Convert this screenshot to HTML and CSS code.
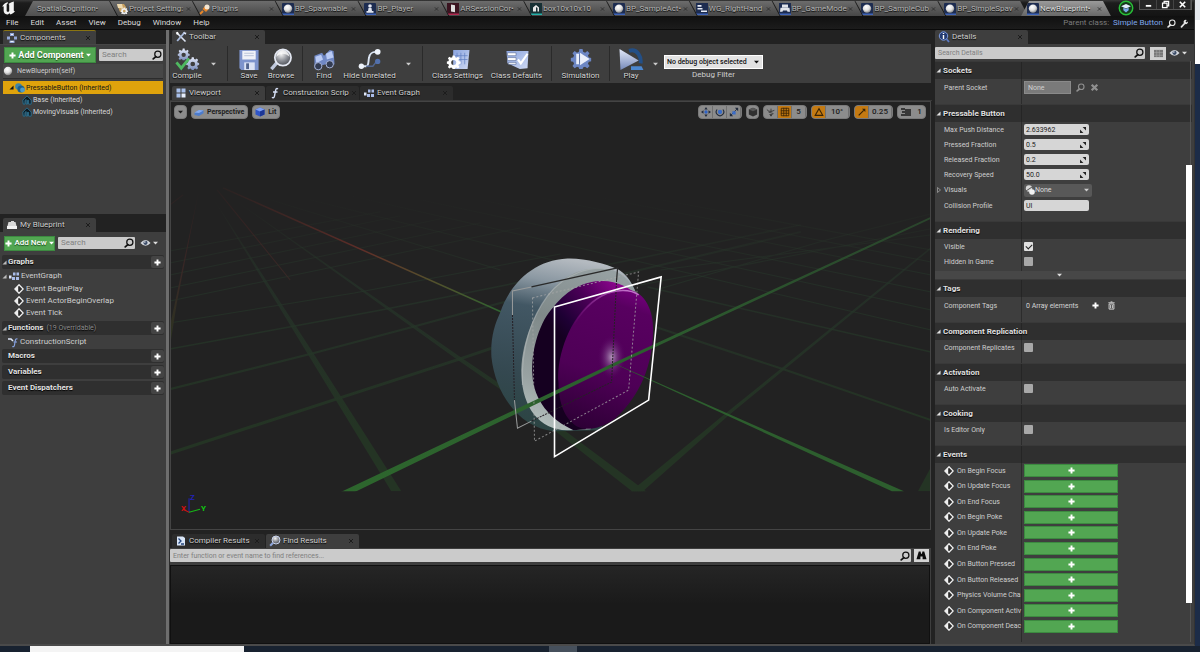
FILE: index.html
```html
<!DOCTYPE html>
<html lang="en">
<head>
<meta charset="utf-8">
<title>NewBlueprint - Blueprint Editor</title>
<link rel="stylesheet" href="styles.css">
</head>
<body>
<svg class="defs" width="0" height="0" aria-hidden="true">
  <defs>
    <linearGradient id="steel" x1="0" y1="0" x2="0" y2="1"><stop offset="0" stop-color="#e4eafa"/><stop offset="1" stop-color="#7488b8"/></linearGradient>
    <linearGradient id="paper" x1="0" y1="0" x2="1" y2="1"><stop offset="0" stop-color="#8aa4e0"/><stop offset="1" stop-color="#cfd9f2"/></linearGradient>
    <radialGradient id="ball" cx=".4" cy=".3" r=".8"><stop offset="0" stop-color="#fff"/><stop offset=".5" stop-color="#e0e0e0"/><stop offset="1" stop-color="#707070"/></radialGradient>
    <radialGradient id="lens" cx=".4" cy=".3" r=".8"><stop offset="0" stop-color="#f2f2f2"/><stop offset=".5" stop-color="#8c8f96"/><stop offset="1" stop-color="#3a3d44"/></radialGradient>
    <symbol id="i-x" viewBox="0 0 6 6"><path d="M1 1l4 4M5 1L1 5" stroke="currentColor" stroke-width="1" fill="none"/></symbol>
    <symbol id="i-xb" viewBox="0 0 8 8"><path d="M1.500 1.500l5 5M6.500 1.500l-5 5" stroke="currentColor" stroke-width="2" fill="none"/></symbol>
    <symbol id="i-caret" viewBox="0 0 6 4"><path d="M0 0.500h6L3 3.800z" fill="currentColor"/></symbol>
    <symbol id="i-tri" viewBox="0 0 6 6"><path d="M5.500 0.500v5H0.500z" fill="currentColor"/></symbol>
    <symbol id="i-plus" viewBox="0 0 8 8"><path d="M4 0.500v7M0.500 4h7" stroke="currentColor" stroke-width="2.200" fill="none"/></symbol>
    <symbol id="i-search" viewBox="0 0 12 12"><circle cx="7" cy="5" r="3.700" fill="none" stroke="currentColor" stroke-width="1.500"/><path d="M4.600 8L1.500 10.600" stroke="currentColor" stroke-width="2.200" stroke-linecap="round"/></symbol>
    <symbol id="i-eye" viewBox="0 0 12 8"><path d="M0.500 4Q6-2.500 11.500 4Q6 10 0.500 4z" fill="#d4d8de"/><circle cx="6" cy="3.800" r="2.300" fill="#3c4c68"/><circle cx="5.300" cy="3" r=".8" fill="#fff"/></symbol>
    <symbol id="i-ball" viewBox="0 0 12 12"><circle cx="6" cy="6" r="5" fill="url(#ball)"/></symbol>
    <symbol id="i-bpball" viewBox="0 0 12 12"><rect width="12" height="12" rx="1" fill="#1d2c50"/><rect y="10.500" width="12" height="1.500" fill="#3f64b8"/><circle cx="6" cy="5.600" r="4.200" fill="url(#ball)"/></symbol>
    <symbol id="i-pawn" viewBox="0 0 12 12"><rect width="12" height="12" rx="1" fill="#1d2c50"/><rect y="10.500" width="12" height="1.500" fill="#3f64b8"/><circle cx="6" cy="3" r="1.800" fill="#e6e9f2"/><path d="M4.500 5h3L8 8h1.500v1.800h-7V8H4z" fill="#dfe3ee"/></symbol>
    <symbol id="i-gear" viewBox="0 0 20 20"><path d="M8.500 1h3l.5 2.600 1.900.8L16 2.900l2.100 2.100-1.500 2.200.8 1.800 2.600.5v3l-2.600.5-.8 1.900 1.500 2.200-2.100 2.100-2.200-1.500-1.900.8-.5 2.500h-3L8 18.500l-1.800-.8L4 19.200 1.900 17.100l1.500-2.200-.8-1.900L0 12.500v-3L2.600 9l.8-1.800L1.900 5 4 2.900l2.200 1.500L8 3.600zM10 7.500a3.500 3.500 0 1 0 0 7 3.500 3.500 0 0 0 0-7z" fill-rule="evenodd"/></symbol>
    <symbol id="i-event" viewBox="0 0 10 10"><path d="M5 .8L9.200 5 5 9.200.8 5z" fill="#2a2a2a" stroke="#f2f2f2" stroke-width="1.300"/><path d="M4.200 2v6L1.300 5z" fill="#f2f2f2"/></symbol>
    <symbol id="i-graph" viewBox="0 0 12 10"><path d="M5 1.500h2.500v3H5zM8.500 1.500H11v3H8.500zM8 6h3v3H8zM4 6h3v3H4z" fill="#a9bbe8"/><path d="M1 4.500h2.500v3H1z" fill="#dfe6f8"/></symbol>
    <symbol id="i-house" viewBox="0 0 12 12"><path d="M1 6l5-5 5 5v5H8V6.500H6.500V11H5V5.500L3.500 6.500V11H1.500z" fill="#0d1a22" stroke="#2a7a9e" stroke-width="1"/></symbol>
    <symbol id="i-wrench" viewBox="0 0 12 12"><path d="M2 10.500L7 5" stroke="currentColor" stroke-width="2.200" stroke-linecap="round"/><path d="M10.500 3.200L8.600 4.700 7.400 3.500 8.900 1.300A2.900 2.900 0 1 0 10.500 3.200z" fill="currentColor"/></symbol>
    <symbol id="i-tools" viewBox="0 0 12 12"><path d="M2 2l8.500 8.500" stroke="#dfe6f4" stroke-width="1.600"/><path d="M9.800 1.200L2.200 10" stroke="#a9bbdd" stroke-width="1.800"/><path d="M8 1.500l2.500 2.300 1-2z" fill="#e8eefa"/><path d="M.8 1.500L3 .8l.8 2.500-2 .5z" fill="#fff"/></symbol>
    <symbol id="i-spin" viewBox="0 0 8 8"><path d="M3.600 1H7v3.400zM4.400 7H1V3.600z" fill="#222"/></symbol>
    <symbol id="i-bino" viewBox="0 0 12 12"><path d="M3 1.500h2L5.500 4h1L7 1.500h2L11.500 10H7.200V7H4.800v3H.5z" fill="#0c0c0c"/></symbol>
    <symbol id="i-lens" viewBox="0 0 12 12"><circle cx="7" cy="5" r="4" fill="url(#lens)" stroke="#c9d3ee" stroke-width="1"/><path d="M3.800 8L1.200 10.800" stroke="#8ea6dc" stroke-width="2"/></symbol>
    <symbol id="i-book" viewBox="0 0 12 10"><path d="M2.500 2h2.500V1h3v1h1.500L10.500 6h-9z" fill="#d9d9d9"/><path d="M1 6h10v3H1z" fill="#f2f2f2"/></symbol>
  </defs>
</svg>

<div class="desk">
<div class="window">
  <header class="titlebar">
    <svg class="logo" viewBox="0 0 16 15"><path d="M1.500 6.500C2.500 4 4.500 2.500 7 2v1C6 3.500 5.800 4 5.800 5v5c0 .8.500 1 1.200 1 .8 0 1.200-.4 1.200-1V5c0-.7-.2-1-.8-1.200C9 2.800 10.500 2 12.500 1.500v8.300c0 .6.400.7 1.200.3C13 11.700 11.300 13 9.500 13.500L8.400 12.500 7 13.600C4.500 13.400 3 12 3 10V6.500c0-.7-.6-.8-1.500 0z" fill="#f4f4f4"/></svg>
    <nav class="doc-tabs">
      <button class="doc first"><span>SpatialCognition•</span></button>
      <button class="doc"><svg class="ic12" viewBox="0 0 12 12"><path d="M1 1h7l2 3v5H4z" fill="#c8a060"/><path d="M1 1h5l1 4H2z" fill="#ecd9b0"/><svg x="4.500" y="4" width="7.500" height="7.500" fill="#f0f0f0"><use href="#i-gear"/></svg></svg><span>Project Setting:</span><svg class="x"><use href="#i-x"/></svg></button>
      <button class="doc"><svg class="ic12" viewBox="0 0 12 12"><path d="M1 11l3-3" stroke="#e8862a" stroke-width="2"/><path d="M3.500 6l3-3.500 3.500 3.200L7 9z" fill="#e8862a"/><circle cx="8" cy="4" r="2.500" fill="#f4e6d2"/></svg><span>Plugins</span><svg class="x"><use href="#i-x"/></svg></button>
      <button class="doc"><svg class="ic12"><use href="#i-bpball"/></svg><span>BP_Spawnable</span><svg class="x"><use href="#i-x"/></svg></button>
      <button class="doc"><svg class="ic12"><use href="#i-pawn"/></svg><span>BP_Player</span><svg class="x"><use href="#i-x"/></svg></button>
      <button class="doc"><svg class="ic12" viewBox="0 0 12 12"><rect width="12" height="12" fill="#3a1420"/><rect y="10.500" width="12" height="1.500" fill="#b02a50"/><path d="M4 1.500l4 .8v7L4 8.500z" fill="#ddd"/></svg><span>ARSessionCor•</span><svg class="x"><use href="#i-x"/></svg></button>
      <button class="doc"><svg class="ic12" viewBox="0 0 12 12"><rect width="12" height="12" fill="#173034"/><rect y="10.500" width="12" height="1.500" fill="#25b0a8"/><path d="M3 8.500v-4L6 2l3 2.500v4H7.500V5L6 4v4.500z" fill="#e8e8e8"/></svg><span>box10x10x10</span><svg class="x"><use href="#i-x"/></svg></button>
      <button class="doc"><svg class="ic12"><use href="#i-bpball"/></svg><span>BP_SampleAct•</span><svg class="x"><use href="#i-x"/></svg></button>
      <button class="doc"><svg class="ic12" viewBox="0 0 12 12"><rect width="12" height="12" fill="#1d2c50"/><rect y="10.500" width="12" height="1.500" fill="#3f64b8"/><path d="M1.500 2h4v1.800h-4zM1.500 5h5v1.500h-5zM5 7.500h6V9H5z" fill="#e8ecf6"/></svg><span>WG_RightHand</span><svg class="x"><use href="#i-x"/></svg></button>
      <button class="doc"><svg class="ic12" viewBox="0 0 12 12"><rect width="12" height="12" fill="#1d2c50"/><rect y="10.500" width="12" height="1.500" fill="#3f64b8"/><path d="M3 1.500h6v3H3zM1.500 4.800h9l.5 4H8.500L8 7.500H4l-.5 1.300H1z" fill="#e0e3ea"/></svg><span>BP_GameMode</span><svg class="x"><use href="#i-x"/></svg></button>
      <button class="doc"><svg class="ic12"><use href="#i-bpball"/></svg><span>BP_SampleCub</span><svg class="x"><use href="#i-x"/></svg></button>
      <button class="doc"><svg class="ic12"><use href="#i-bpball"/></svg><span>BP_SimpleSpav</span><svg class="x"><use href="#i-x"/></svg></button>
      <button class="doc active"><svg class="ic12"><use href="#i-bpball"/></svg><span>NewBlueprint•</span><svg class="x"><use href="#i-x"/></svg></button>
    </nav>
    <button class="tutorial" aria-label="Tutorials"><svg viewBox="0 0 18 18"><circle cx="9" cy="9" r="7.600" fill="#16391a" stroke="#28c038" stroke-width="1.600"/><path d="M3.500 7L9 4.500 14.500 7 9 9.500z" fill="#e4eefc"/><path d="M6 8.500v3L9 14l3-2.500v-3L9 10z" fill="#7aa6e8"/></svg></button>
    <div class="win-controls">
      <button aria-label="Minimize"><svg viewBox="0 0 10 10"><path d="M2 6.500h6" stroke="#fff" stroke-width="2"/></svg></button>
      <button aria-label="Restore"><svg viewBox="0 0 10 10"><path d="M3.500 3V1.500h5v5H7M1.700 3.500h5v5h-5z" fill="none" stroke="#fff" stroke-width="1.400"/></svg></button>
      <button aria-label="Close"><svg viewBox="0 0 10 10"><path d="M2 2l6 6M8 2L2 8" stroke="#fff" stroke-width="1.800"/></svg></button>
    </div>
  </header>

  <div class="menubar">
    <nav class="menus"><button>File</button><button>Edit</button><button>Asset</button><button>View</button><button>Debug</button><button>Window</button><button>Help</button></nav>
    <div class="parent"><span>Parent class:</span><a href="#">Simple Button</a><button aria-label="Browse parent"><svg class="ic9"><use href="#i-search"/></svg></button><button aria-label="Edit parent"><svg class="ic9"><use href="#i-wrench"/></svg></button></div>
  </div>

  <main class="work">
    <aside class="left">
      <div class="strip"><button class="tab yellow"><svg class="ic12" viewBox="0 0 12 12"><path d="M4 1h4v3H4zM1 4.500h3v3H1zM8 4.500h3v3H8zM3.500 8.500h5V11h-5z" fill="#93a6d8"/><path d="M5 2h2v1H5zM4.500 9h3v1h-3z" fill="#eef2fc"/></svg><span>Components</span><svg class="x"><use href="#i-x"/></svg></button></div>
      <section class="components">
        <div class="tools">
          <button class="green add-comp"><svg class="ic7"><use href="#i-plus"/></svg>Add Component<svg class="car"><use href="#i-caret"/></svg></button>
          <div class="field grow"><input type="text" placeholder="Search" aria-label="Search components"><svg class="ic12"><use href="#i-search"/></svg></div>
        </div>
        <div class="self"><svg class="ic10"><use href="#i-ball"/></svg>NewBlueprint(self)</div>
        <ul class="tree">
          <li class="selected"><svg class="ic5"><use href="#i-tri"/></svg><svg class="ic10" viewBox="0 0 10 10"><circle cx="3.500" cy="3.500" r="3.300" fill="#3f86a8"/><circle cx="6" cy="6" r="3.600" fill="#1c5e8c"/><circle cx="7.500" cy="7" r="2.400" fill="#4f9cc8"/></svg>PressableButton (Inherited)</li>
          <li class="child"><svg class="ic10"><use href="#i-house"/></svg>Base (Inherited)</li>
          <li class="child"><svg class="ic10"><use href="#i-house"/></svg>MovingVisuals (Inherited)</li>
        </ul>
      </section>
      <div class="strip spaced"><button class="tab"><svg class="ic12"><use href="#i-book"/></svg><span>My Blueprint</span><svg class="x"><use href="#i-x"/></svg></button></div>
      <section class="blueprint">
        <div class="tools">
          <button class="green add-new"><svg class="ic7"><use href="#i-plus"/></svg>Add New<svg class="car"><use href="#i-caret"/></svg></button>
          <div class="field grow"><input type="text" placeholder="Search" aria-label="Search blueprint"><svg class="ic12"><use href="#i-search"/></svg></div>
          <button class="viewopt" aria-label="View options"><svg class="eye"><use href="#i-eye"/></svg><svg class="car"><use href="#i-caret"/></svg></button>
        </div>
        <div class="cat"><svg class="ic5"><use href="#i-tri"/></svg><b>Graphs</b><button aria-label="Add graph"><svg class="ic7"><use href="#i-plus"/></svg></button></div>
        <div class="item"><svg class="ic5"><use href="#i-tri"/></svg><svg class="ic12"><use href="#i-graph"/></svg>EventGraph</div>
        <div class="item sub"><svg class="ic10"><use href="#i-event"/></svg>Event BeginPlay</div>
        <div class="item sub"><svg class="ic10"><use href="#i-event"/></svg>Event ActorBeginOverlap</div>
        <div class="item sub"><svg class="ic10"><use href="#i-event"/></svg>Event Tick</div>
        <div class="cat after"><svg class="ic5"><use href="#i-tri"/></svg><b>Functions</b><small>(19 Overridable)</small><button aria-label="Add function"><svg class="ic7"><use href="#i-plus"/></svg></button></div>
        <div class="item fn"><svg class="ic12" viewBox="0 0 12 12"><path d="M1 3h3l2 2" stroke="#dfe8fa" stroke-width="1.600" fill="none"/><path d="M10.500 3c-1.500-.6-2 .2-2.300 2L7.500 9c-.3 1.500-1 2-2.200 1.500M6.500 6h3.500" stroke="#86a2e0" stroke-width="1.200" fill="none"/></svg>ConstructionScript</div>
        <div class="cat bare"><b>Macros</b><button aria-label="Add macro"><svg class="ic7"><use href="#i-plus"/></svg></button></div>
        <div class="cat bare"><b>Variables</b><button aria-label="Add variable"><svg class="ic7"><use href="#i-plus"/></svg></button></div>
        <div class="cat bare"><b>Event Dispatchers</b><button aria-label="Add dispatcher"><svg class="ic7"><use href="#i-plus"/></svg></button></div>
      </section>
    </aside>

    <div class="split"></div>

    <section class="center">
      <div class="strip"><button class="tab"><svg class="ic12"><use href="#i-tools"/></svg><span>Toolbar</span><svg class="x"><use href="#i-x"/></svg></button></div>
      <div class="toolbar">
        <button class="tool"><svg viewBox="0 0 26 24"><svg x="3" y="0" width="13" height="13" fill="url(#steel)"><use href="#i-gear"/></svg><svg x="12" y="9" width="14" height="14" fill="url(#steel)"><use href="#i-gear"/></svg><path d="M2 15l5 6 8-10" fill="none" stroke="#4fb860" stroke-width="3"/></svg>Compile</button>
        <button class="drop" aria-label="Compile options"><svg class="car"><use href="#i-caret"/></svg></button>
        <hr>
        <button class="tool narrow"><svg viewBox="0 0 24 24"><path d="M2 2h20v21H4l-2-2z" fill="#7d93cc"/><path d="M5 3h14v9H5z" fill="#f0f2f8"/><path d="M7 5.500h10M7 8h10" stroke="#b9c2d8" stroke-width="1"/><path d="M7 15h11v8H7z" fill="#dbe2f4"/><path d="M9 16h3v6H9z" fill="#52648f"/></svg>Save</button>
        <button class="tool narrow"><svg viewBox="0 0 24 24"><path d="M8 15L2 22" stroke="#bfc8dc" stroke-width="3.500"/><circle cx="14" cy="10" r="8.500" fill="url(#lens)" stroke="#e4e8f2" stroke-width="1.800"/><path d="M7 9q7-6 14 0-2-7-7-7t-7 7z" fill="#fff" opacity=".75"/></svg>Browse</button>
        <hr>
        <button class="tool narrow"><svg viewBox="0 0 24 24"><path d="M2 8l8-3 2 3 6-6 4 1 1 14-5 3-4-3-4 1-2 4-6-1z" fill="#7088c4"/><path d="M3 9l6-2 2 5-7 4zM14 6l6-3 2 7-7 2z" fill="#b9caf4"/><circle cx="18" cy="17" r="3.800" fill="#333c52" stroke="#a7b4d8"/><circle cx="6" cy="19" r="3.800" fill="#333c52" stroke="#a7b4d8"/></svg>Find</button>
        <button class="tool wide"><svg viewBox="0 0 26 24"><path d="M4 19h5c3 0 2-5 3-9 1-5 3-6 7-6" fill="none" stroke="#dce6f4" stroke-width="2"/><path d="M9 19h7l3-4" fill="none" stroke="#51658f" stroke-width="1.500"/><circle cx="4" cy="19" r="2.800" fill="#eef3fa"/><circle cx="21" cy="4" r="3" fill="#eef3fa"/><circle cx="21" cy="14" r="2.800" fill="#5270ac"/></svg>Hide Unrelated</button>
        <button class="drop" aria-label="Hide options"><svg class="car"><use href="#i-caret"/></svg></button>
        <hr>
        <button class="tool wide"><svg viewBox="0 0 26 24"><path d="M8 2h17l-2 20H8z" fill="url(#paper)"/><path d="M12 5v12M16 5v12M20 5v12M9 8h14M9 12h14" stroke="#5d7cc0" stroke-width=".7"/><svg x="1" y="7" width="15" height="15" fill="#fff"><use href="#i-gear"/></svg></svg>Class Settings</button>
        <button class="tool wide"><svg viewBox="0 0 26 24"><path d="M2 3h23l-1 18-8 1-13-6z" fill="url(#paper)"/><path d="M3 5h9v3H3zM3 10h9v3H3zM4 15h8v2H4z" fill="#fff" stroke="#52648f" stroke-width=".6"/><path d="M14 12l3 4 7-10" stroke="#fff" stroke-width="2.200" fill="none"/></svg>Class Defaults</button>
        <hr>
        <button class="tool mid"><svg viewBox="0 0 26 24"><svg x="2" y="0" width="22" height="22" fill="#6c86c4"><use href="#i-gear"/></svg><circle cx="13" cy="11.500" r="5" fill="#54699c"/><path d="M8 6h3v11H8zM12 5l10 6.500L12 18z" fill="#e9eefa"/></svg>Simulation</button>
        <hr>
        <button class="tool narrow"><svg viewBox="0 0 26 24"><path d="M11 3c9-3 13 7 12 13" fill="none" stroke="#234f86" stroke-width="4"/><path d="M13 19h11l2 4H13z" fill="#4b87d0"/><path d="M1 1l20 12L2 23z" fill="url(#steel)"/></svg>Play</button>
        <button class="drop slim" aria-label="Play options"><svg class="car"><use href="#i-caret"/></svg></button>
        <div class="debug"><div class="selwrap"><select id="dbg"><option>No debug object selected</option></select><svg class="car"><use href="#i-caret"/></svg></div><label for="dbg">Debug Filter</label></div>
      </div>
      <div class="strip views">
        <button class="tab"><svg class="ic12" viewBox="0 0 12 12"><path d="M1.500 1.500h4v4h-4zM6.500 1.500h4v4h-4zM1.500 6.500h4v4h-4z" fill="#a9c0ea"/><path d="M6.500 6.500h4v4h-4z" fill="#e6eefc"/></svg><span>Viewport</span><svg class="x"><use href="#i-x"/></svg></button>
        <button class="tab dim"><svg class="ic12" viewBox="0 0 12 12"><path d="M9 2C7.500.8 6.800 2 6.500 4L5.500 9C5.200 10.800 4 11.200 3 10.300M4 5h4.500" stroke="#d5def5" stroke-width="1.400" fill="none"/></svg><span>Construction Scrip</span><svg class="x"><use href="#i-x"/></svg></button>
        <button class="tab dim"><svg class="ic12"><use href="#i-graph"/></svg><span>Event Graph</span><svg class="x"><use href="#i-x"/></svg></button>
      </div>
      <div class="viewport">
        <svg class="scene" viewBox="171 101 758 429" preserveAspectRatio="xMidYMid slice" role="img" aria-label="3D preview of the pressable button">
          <defs>
            <linearGradient id="dim" gradientUnits="userSpaceOnUse" x1="0" y1="195" x2="0" y2="430"><stop offset="0" stop-color="#2a3a2a" stop-opacity="0"/><stop offset=".35" stop-color="#26362a" stop-opacity=".6"/><stop offset="1" stop-color="#243424"/></linearGradient>
            <linearGradient id="axis" gradientUnits="userSpaceOnUse" x1="223" y1="188" x2="501" y2="312"><stop offset="0" stop-color="#4a2422" stop-opacity=".2"/><stop offset=".5" stop-color="#602e28"/><stop offset=".75" stop-color="#54502c"/><stop offset="1" stop-color="#2f6430"/></linearGradient>
            <linearGradient id="red" gradientUnits="userSpaceOnUse" x1="0" y1="190" x2="0" y2="360"><stop offset="0" stop-color="#4a2222" stop-opacity=".15"/><stop offset=".5" stop-color="#382826"/><stop offset="1" stop-color="#28361f"/></linearGradient>
            <linearGradient id="main" gradientUnits="userSpaceOnUse" x1="342" y1="491" x2="930" y2="217"><stop offset="0" stop-color="#2d662d"/><stop offset=".5" stop-color="#2c5e2e"/><stop offset="1" stop-color="#2a442c"/></linearGradient>
            <linearGradient id="shell" gradientUnits="userSpaceOnUse" x1="560" y1="258" x2="530" y2="430"><stop offset="0" stop-color="#b4bac0"/><stop offset=".14" stop-color="#8b98a2"/><stop offset=".3" stop-color="#425764"/><stop offset=".7" stop-color="#344850"/><stop offset="1" stop-color="#2b4442"/></linearGradient>
            <linearGradient id="ring" gradientUnits="userSpaceOnUse" x1="610" y1="268" x2="540" y2="430"><stop offset="0" stop-color="#98a2a4"/><stop offset=".4" stop-color="#7f8989"/><stop offset=".75" stop-color="#98a2a2"/><stop offset="1" stop-color="#b6c2c0"/></linearGradient>
            <linearGradient id="side" gradientUnits="userSpaceOnUse" x1="612" y1="280" x2="555" y2="330"><stop offset="0" stop-color="#8a048c"/><stop offset=".4" stop-color="#4c0058"/><stop offset=".8" stop-color="#1e0034"/><stop offset="1" stop-color="#150020"/></linearGradient>
            <linearGradient id="cap" gradientUnits="userSpaceOnUse" x1="630" y1="290" x2="580" y2="430"><stop offset="0" stop-color="#72007a"/><stop offset=".12" stop-color="#580060"/><stop offset=".6" stop-color="#4e0056"/><stop offset="1" stop-color="#2c0034"/></linearGradient>
            <radialGradient id="shine"><stop offset="0" stop-color="#b092b8"/><stop offset=".4" stop-color="#8a5c96" stop-opacity=".55"/><stop offset="1" stop-color="#560060" stop-opacity="0"/></radialGradient>
            <linearGradient id="rim" gradientUnits="userSpaceOnUse" x1="572" y1="325" x2="625" y2="290"><stop offset="0" stop-color="#8c2a94" stop-opacity="0"/><stop offset=".6" stop-color="#9c40a4" stop-opacity=".8"/><stop offset="1" stop-color="#c070c8"/></linearGradient>
            <clipPath id="ground"><rect x="0" y="101" width="1200" height="390"/></clipPath>
          </defs>
          <g clip-path="url(#ground)">
            <g fill="none" stroke="url(#dim)" stroke-width="1">
              <path d="M170 301L520 228M170 288L480 223M170 275L440 219M170 323L354 293 560 254M170 263L400 216M170 251L380 212"/>
              <path d="M170 349L381 310 640 258 800 225" stroke-width="1.500"/><path d="M170 389L310 354 412 327 500 303 800 232" stroke-width="2"/>
              <path d="M270 200L500 270M310 200L560 262M350 196L640 262 930 330M420 200L720 264 930 310M480 200L930 292M540 198L930 275M600 198L930 262M660 200L930 250"/>
              <path d="M660 270L930 235M640 285L930 229M655 290L829 239 930 214"/>
              <path d="M647 287L930 352" stroke-width="1.500"/><path d="M655 327L782 369 930 420" stroke-width="2"/>
              <path d="M170 453L339 398 459 359 640 298" stroke-width="3"/>
            </g>
            <g fill="url(#dim)">
              <path d="M209 192L391 491h10L313 353z"/><path d="M223 192L456 359 514 399 634 493h14L518 396 460 357z"/>
              <path d="M628 493h12l88-78 55-45 147-121v-2L781 368 725 413z"/><path d="M917 491h13v-24z"/>
            </g>
            <path d="M199 190L170 326v20l7-44z" fill="url(#red)"/><path d="M183 195L170 205M217 190L290 280" stroke="url(#red)" fill="none"/>
            <path d="M223 188L501 312" stroke="url(#axis)" stroke-width="1.500" fill="none"/>
          </g>
          <path d="M491 357C490 338 494 325 500 312 508 288 530 260 567 258.500 585 258 605 264 617 269 632 277 640 300 642 320L600 430 553 431C520 428 495 395 491 357z" fill="url(#shell)"/>
          <path d="M521 375C520 345 533 315 547 296 565 271 590 265 612 270 628 276 638 290 642 320L590 429 570 430C540 432 522 408 521 375z" fill="url(#ring)"/>
          <path d="M522 385C520 345 533 315 547 296 565 273 590 265 612 270" fill="none" stroke="#b9c0c2" stroke-width="1.200" opacity=".5"/>
          <path d="M532 375C530 350 540 320 553 307 568 288 585 281 602 281 617 281 630 288 637 296L585 429 573 430C550 420 533 400 532 375z" fill="url(#side)"/>
          <path d="M558 383C556 360 566 325 588 304 600 292 615 288 628 290 645 292 653 312 652.500 330 652 365 640 395 615 418 600 429 585 431 576 426 563 418 558 400 558 383z" fill="url(#cap)"/>
          <path d="M568 336C575 318 588 303 601 296 615 289 630 289 638 295" fill="none" stroke="url(#rim)" stroke-width="1.500"/>
          <ellipse cx="611" cy="357" rx="14" ry="22" fill="url(#shine)"/>
          <path d="M338 493h14L614 366 930 219v-2L613 363z" fill="url(#main)" clip-path="url(#ground)"/>
          <path d="M613 363.500L891 491h12L615 364z" fill="#2d5e2e"/>
          <g fill="none" stroke-linejoin="miter">
            <path d="M531 287L512 291v24M514 400l3 28 14-7" stroke="#9a9c9c" stroke-width="1"/>
            <path d="M531 287L617 268l-1 12" stroke="#2a2a2a" stroke-width="1.300"/>
            <path d="M512 315l2 85M616 280l-5 102-80 39" stroke="#262026" stroke-width="1" stroke-dasharray="2 1"/>
            <path d="M532 298L638 272 628 390 534 441z" stroke="#aaa" stroke-width="1" stroke-dasharray="2 2" opacity=".75"/>
            <path d="M554 307L660.500 277 648 400 554 456.500z" stroke="#fff" stroke-width="1.600"/>
          </g>
          <g class="axes" fill="none"><path d="M189 512V498" stroke="#2222b8"/><path d="M189 512l-6-3" stroke="#c01818"/><path d="M189 512l11-3" stroke="#18b818"/>
            <text x="190" y="500" fill="#2222b8">Z</text><text x="181" y="511" fill="#d01010">X</text><text x="201" y="511" fill="#10c810">Y</text></g>
        </svg>
        <div class="vp-bar">
          <button class="pill sq" aria-label="Viewport options"><svg class="car"><use href="#i-caret"/></svg></button>
          <button class="pill label"><svg class="ic10" viewBox="0 0 10 10"><path d="M.5 6L5 3l4.500.5v2.800L5 9 .5 8z" fill="#4d7ccc"/><path d="M.5 5.500L5 3l4.500.5L5 6z" fill="#86acf0"/></svg>Perspective</button>
          <button class="pill label"><svg class="ic10" viewBox="0 0 10 10"><path d="M5 .5l4.500 2v5L5 9.500.5 7.500v-5z" fill="#2f55c8"/><path d="M5 .5l4.500 2L5 4.500.5 2.500z" fill="#7fa0f4"/><path d="M5 4.500v5l4.500-2v-5z" fill="#1d3796"/></svg>Lit</button>
          <span class="push"></span>
          <div class="pill group three"><button aria-label="Move"><svg class="ic12" viewBox="0 0 12 12"><path d="M6 0l2 3H4zM6 12l2-3H4zM0 6l3-2v4zM12 6L9 4v4z" fill="#222b3c"/><circle cx="6" cy="6" r="2" fill="#2f62c4"/></svg></button><button aria-label="Rotate"><svg class="ic12" viewBox="0 0 12 12"><path d="M2.500 3A4.500 4.500 0 1 0 9.500 3" fill="none" stroke="#222b3c" stroke-width="1.400"/><circle cx="6" cy="6" r="2.600" fill="#3a6cc8"/></svg></button><button aria-label="Scale"><svg class="ic12" viewBox="0 0 12 12"><path d="M7 1h4v4zM1 7v4h4z" fill="#222b3c"/><path d="M2 10l8-8" stroke="#222b3c"/><path d="M4 5h4v4H4z" fill="#3a6cc8"/></svg></button></div>
          <button class="pill sq" aria-label="Coordinate space"><svg class="ic12" viewBox="0 0 12 12"><path d="M6 1l5 2v6l-5 2.500L1 9V3z" fill="#303030"/><path d="M6 1l5 2-5 2-5-2z" fill="#585858"/></svg></button>
          <div class="pill group three"><button aria-label="Surface snapping"><svg class="ic12" viewBox="0 0 12 12"><path d="M1 3q3 4 9 1M6 2v4M3 6l6 2M6 11l-1.500-2h3z" stroke="#333" fill="none"/></svg></button><button class="on" aria-label="Grid snapping"><svg class="ic12" viewBox="0 0 12 12"><path d="M1.500 1.500h9v9h-9zM4.500 1v10M7.500 1v10M1 4.500h10M1 7.500h10" stroke="#3a2404" fill="none"/></svg></button><button>5</button></div>
          <div class="pill group two"><button class="on" aria-label="Rotation snapping"><svg class="ic12" viewBox="0 0 12 12"><path d="M1.500 10L6 2l4.500 8z" stroke="#3a2404" stroke-width="1.300" fill="none"/></svg></button><button class="val">10°</button></div>
          <div class="pill group two"><button class="on" aria-label="Scale snapping"><svg class="ic12" viewBox="0 0 12 12"><path d="M2 10l6-6" stroke="#3a2404" stroke-width="1.500"/><path d="M6 2h4v4z" fill="#3a2404"/></svg></button><button class="val">0.25</button></div>
          <button class="pill cam"><svg class="ic12" viewBox="0 0 12 12"><path d="M5 3h6v7H5zM1 2h4v2H1zM2 5h3v2H2zM1 8h4v2H1z" fill="#383838"/></svg>1</button>
        </div>
      </div>
      <div class="strip results-tabs">
        <button class="tab dim"><svg class="ic12" viewBox="0 0 12 12"><path d="M2 1.500h6L10 3v7.500H2z" fill="#d9e6f8"/><path d="M3.500 3.500L6 6 3.500 8.500M6 9h3" stroke="#24457c" stroke-width="1.300" fill="none"/></svg><span>Compiler Results</span><svg class="x"><use href="#i-x"/></svg></button>
        <button class="tab"><svg class="ic12"><use href="#i-lens"/></svg><span>Find Results</span><svg class="x"><use href="#i-x"/></svg></button>
      </div>
      <div class="find">
        <div class="findrow"><div class="field grow small"><input type="text" placeholder="Enter function or event name to find references..." aria-label="Find references"><svg class="ic12"><use href="#i-search"/></svg></div><button class="bino" aria-label="Find in all blueprints"><svg class="ic12"><use href="#i-bino"/></svg></button></div>
        <div class="found"></div>
      </div>
    </section>

    <aside class="right">
      <div class="strip"><button class="tab"><svg class="ic12" viewBox="0 0 12 12"><circle cx="5.500" cy="5" r="4.200" fill="#243a70" stroke="#7c9ae0"/><path d="M5.500 4v4M5.500 2v1" stroke="#fff" stroke-width="1.400"/><path d="M8.500 8l2.500 3" stroke="#5a7ac8" stroke-width="1.800"/></svg><span>Details</span><svg class="x"><use href="#i-x"/></svg></button></div>
      <div class="details">
        <div class="dsearch"><div class="field grow small"><input type="text" placeholder="Search Details" aria-label="Search details"><svg class="ic12"><use href="#i-search"/></svg></div>
          <button class="matrix" aria-label="Property matrix"><svg viewBox="0 0 12 10"><path d="M1 1h10v8H1z" fill="#777"/><path d="M4 1v8M7 1v8M1 4h10M1 7h10" stroke="#aaa" stroke-width=".6"/></svg></button>
          <button class="viewopt" aria-label="Details view options"><svg class="eye"><use href="#i-eye"/></svg><svg class="car"><use href="#i-caret"/></svg></button></div>
        <div class="props">
          <section><h2><svg class="ic5"><use href="#i-tri"/></svg>Sockets</h2>
            <div class="row tall"><label for="p1">Parent Socket</label><div><input id="p1" class="socket" value="None" disabled><svg class="ic9 g"><use href="#i-search"/></svg><svg class="ic9 g"><use href="#i-xb"/></svg></div></div></section>
          <section><h2><svg class="ic5"><use href="#i-tri"/></svg>Pressable Button</h2>
            <div class="row"><label for="p2">Max Push Distance</label><div><span class="num"><input id="p2" value="2.633962"><svg><use href="#i-spin"/></svg></span></div></div>
            <div class="row"><label for="p3">Pressed Fraction</label><div><span class="num"><input id="p3" value="0.5"><svg><use href="#i-spin"/></svg></span></div></div>
            <div class="row"><label for="p4">Released Fraction</label><div><span class="num"><input id="p4" value="0.2"><svg><use href="#i-spin"/></svg></span></div></div>
            <div class="row"><label for="p5">Recovery Speed</label><div><span class="num"><input id="p5" value="50.0"><svg><use href="#i-spin"/></svg></span></div></div>
            <div class="row visuals"><label for="p6"><svg viewBox="0 0 4 6"><path d="M.5.5L3.500 3l-3 2.500z" fill="none" stroke="#aaa" stroke-width=".7"/></svg>Visuals</label><div><span class="combo"><svg class="ic10" viewBox="0 0 10 10"><circle cx="4" cy="3.500" r="3.200" fill="#d8d8d8"/><circle cx="7" cy="7" r="2.800" fill="#f2f2f2"/><path d="M1 6l6-4" stroke="#555"/></svg><select id="p6"><option>None</option></select><svg class="car"><use href="#i-caret"/></svg></span></div></div>
            <div class="row"><label for="p7">Collision Profile</label><div><span class="num"><input id="p7" value="UI"></span></div></div></section>
          <section class="flush"><h2><svg class="ic5"><use href="#i-tri"/></svg>Rendering</h2>
            <div class="row"><label for="p8">Visible</label><div><input id="p8" type="checkbox" checked></div></div>
            <div class="row"><label for="p9">Hidden in Game</label><div><input id="p9" type="checkbox"></div></div>
            <button class="more" aria-label="Show advanced"><svg class="car"><use href="#i-caret"/></svg></button></section>
          <section><h2><svg class="ic5"><use href="#i-tri"/></svg>Tags</h2>
            <div class="row tall"><span class="name">Component Tags</span><div class="array"><span>0 Array elements</span><button aria-label="Add tag"><svg class="ic7"><use href="#i-plus"/></svg></button><button aria-label="Empty tags"><svg class="ic9" viewBox="0 0 10 10"><path d="M1.500 2h7M4 1h2M2.300 3.300h5.400v5.700H2.300zM4 4.500v3.500M6 4.500v3.500" fill="none" stroke="#ddd" stroke-width="1"/></svg></button></div></div></section>
          <section><h2><svg class="ic5"><use href="#i-tri"/></svg>Component Replication</h2>
            <div class="row"><label for="p10">Component Replicates</label><div><input id="p10" type="checkbox"></div></div></section>
          <section><h2><svg class="ic5"><use href="#i-tri"/></svg>Activation</h2>
            <div class="row"><label for="p11">Auto Activate</label><div><input id="p11" type="checkbox"></div></div></section>
          <section><h2><svg class="ic5"><use href="#i-tri"/></svg>Cooking</h2>
            <div class="row"><label for="p12">Is Editor Only</label><div><input id="p12" type="checkbox"></div></div></section>
          <section class="events"><h2><svg class="ic5"><use href="#i-tri"/></svg>Events</h2>
            <div class="evlist">
              <div class="row"><span class="name"><svg class="ic10"><use href="#i-event"/></svg>On Begin Focus</span><div><button class="green" aria-label="Add On Begin Focus"><svg class="ic7"><use href="#i-plus"/></svg></button></div></div>
              <div class="row"><span class="name"><svg class="ic10"><use href="#i-event"/></svg>On Update Focus</span><div><button class="green" aria-label="Add On Update Focus"><svg class="ic7"><use href="#i-plus"/></svg></button></div></div>
              <div class="row"><span class="name"><svg class="ic10"><use href="#i-event"/></svg>On End Focus</span><div><button class="green" aria-label="Add On End Focus"><svg class="ic7"><use href="#i-plus"/></svg></button></div></div>
              <div class="row"><span class="name"><svg class="ic10"><use href="#i-event"/></svg>On Begin Poke</span><div><button class="green" aria-label="Add On Begin Poke"><svg class="ic7"><use href="#i-plus"/></svg></button></div></div>
              <div class="row"><span class="name"><svg class="ic10"><use href="#i-event"/></svg>On Update Poke</span><div><button class="green" aria-label="Add On Update Poke"><svg class="ic7"><use href="#i-plus"/></svg></button></div></div>
              <div class="row"><span class="name"><svg class="ic10"><use href="#i-event"/></svg>On End Poke</span><div><button class="green" aria-label="Add On End Poke"><svg class="ic7"><use href="#i-plus"/></svg></button></div></div>
              <div class="row"><span class="name"><svg class="ic10"><use href="#i-event"/></svg>On Button Pressed</span><div><button class="green" aria-label="Add On Button Pressed"><svg class="ic7"><use href="#i-plus"/></svg></button></div></div>
              <div class="row"><span class="name"><svg class="ic10"><use href="#i-event"/></svg>On Button Released</span><div><button class="green" aria-label="Add On Button Released"><svg class="ic7"><use href="#i-plus"/></svg></button></div></div>
              <div class="row"><span class="name"><svg class="ic10"><use href="#i-event"/></svg>Physics Volume Cha</span><div><button class="green" aria-label="Add Physics Volume Changed"><svg class="ic7"><use href="#i-plus"/></svg></button></div></div>
              <div class="row"><span class="name"><svg class="ic10"><use href="#i-event"/></svg>On Component Activ</span><div><button class="green" aria-label="Add On Component Activated"><svg class="ic7"><use href="#i-plus"/></svg></button></div></div>
              <div class="row"><span class="name"><svg class="ic10"><use href="#i-event"/></svg>On Component Deac</span><div><button class="green" aria-label="Add On Component Deactivated"><svg class="ic7"><use href="#i-plus"/></svg></button></div></div>
            </div></section>
          <div class="scroll"><i></i></div>
        </div>
      </div>
    </aside>
  </main>
</div>
<div class="edge"></div>
<div class="taskbar"><i class="pane"></i><i class="app"></i></div>
</div>
</body>
</html>
```

FILE: styles.css
```css
* { box-sizing: border-box; }
body { margin: 0; background: #1a2432; color: #cecece; font: 8px/12px Roboto, "Liberation Sans", sans-serif; }
button, input, select { font: inherit; color: inherit; margin: 0; padding: 0; border: 0; background: none; border-radius: 0; }
button { display: flex; align-items: center; white-space: nowrap; }
svg { display: block; flex: none; }
.defs { position: absolute; }
.ic5 { width: 5px; height: 5px; }
.ic7 { width: 7px; height: 7px; }
.ic9 { width: 9px; height: 9px; }
.ic10 { width: 10px; height: 10px; }
.ic12 { width: 12px; height: 12px; }
.car { width: 5px; height: 4px; }
.eye { width: 11px; height: 8px; }
.x { width: 6px; height: 6px; color: #1c1c1c; }

.desk { display: grid; grid-template-columns: minmax(0, 1fr) 5px; grid-template-rows: 1fr 6px; height: 100vh; }
.window { display: flex; flex-direction: column; min-width: 0; min-height: 0; background: #222; border-right: 1px solid #333; border-bottom: 2px solid #4a4a4a; }
.edge { background: linear-gradient(#e6e9ee 20px, #fff 20px, #fff 64px, #1c2c48 64px); }
.taskbar { grid-column: 1 / -1; display: flex; background: #182230; }
.taskbar .pane { width: 214px; margin-left: 30px; background: #f4f4f4; }
.taskbar .app { width: 28px; margin-left: 305px; background: #46505c; }

.titlebar { display: flex; height: 16px; flex: none; background: linear-gradient(#383838, #1c1c1c 3px, #141414); }
.logo { width: 18px; height: 16px; margin-right: 7px; }
.doc-tabs { display: flex; flex: 1; min-width: 0; padding-top: 1px; }
.doc { flex: 1; min-width: 0; margin-left: -7px; padding: 0 9px 0 6px; gap: 1px; height: 15px; color: #b4b4b4; text-shadow: 0 1px 1px #000; background: linear-gradient(#6c6c6c, #474747); clip-path: polygon(0 0, calc(100% - 8px) 0, 100% 100%, 8px 100%); }
.doc span { flex: 1; min-width: 0; text-align: left; }
.doc .x { width: 5px; color: #2c2c2c; }
.doc.first { flex: 0 0 92px; margin-left: 0; padding-left: 12px; background: linear-gradient(#6c6c6c, #505050); clip-path: polygon(8px 0, calc(100% - 8px) 0, 100% 100%, 0 100%); }
.doc.active { background: linear-gradient(#9a9a9a, #686868); clip-path: polygon(8px 0, calc(100% - 8px) 0, 100% 100%, 0 100%); color: #ddd; }
.tutorial { flex: none; margin: 0 4px 0 6px; }
.tutorial svg { width: 18px; height: 16px; }
.win-controls { display: flex; flex: none; width: 53px; margin-right: 2px; height: 10px; border: 1px solid #555; border-top: 0; background: #262626; }
.win-controls button { flex: 1; justify-content: center; border-right: 1px solid #444; }
.win-controls svg { width: 9px; height: 9px; }

.menubar { display: flex; justify-content: space-between; height: 14px; flex: none; background: linear-gradient(#101010, #1c1c1c); border-bottom: 1px solid #0a0a0a; padding: 1px 5px 0 6px; }
.menus { display: flex; gap: 12px; color: #dcdcdc; }
.parent { display: flex; align-items: center; gap: 4px; color: #7c7c7c; }
.parent a { color: #7fa6ea; text-decoration: none; }
.parent button { color: #e4e4e4; }

.work { display: grid; grid-template-columns: 166px 4px 1fr 262px; flex: 1; min-height: 0; }
.left, .center, .right { display: flex; flex-direction: column; min-width: 0; min-height: 0; }
.split { background: #6e6e6e; border-right: 1px solid #2c2c2c; }
.strip { display: flex; gap: 1px; height: 14px; flex: none; padding-left: 3px; background: #222; }
.center .strip { padding-left: 2px; }
.tab { width: 93px; height: 100%; padding: 0 5px 0 3px; gap: 2px; background: #3e3e3e; border-radius: 2px 2px 0 0; text-shadow: 0 1px 1px #000; }
.tab span { flex: 1; text-align: left; }
.tab.dim { background: #2c2c2c; }
.tab.yellow { border-top: 1px solid #8a7412; }

.components { height: 170px; flex: none; padding: 2px 3px 0; background: #3e3e3e; border-top: 1px solid #464646; }
.tools { display: flex; align-items: center; gap: 3px; padding-left: 1px; }
.green { background: #52a652; color: #fff; border: 1px solid #3c8a40; justify-content: center; font-weight: 500; text-shadow: 0 1px 1px #1c4c1c; }
.add-comp { height: 16px; width: 92px; gap: 2px; font-size: 9px; font-weight: 700; }
.add-new { height: 15px; width: 51px; gap: 2px; }
.field { display: flex; align-items: center; height: 12px; padding: 0 1px 0 3px; background: #cbcbcb; color: #111; border-radius: 1px; }
.field input { flex: 1; min-width: 0; width: 0; outline: 0; height: 12px; }
.field.small input { font-size: 7px; }
.field input::placeholder { color: #808080; opacity: 1; }
.field .ic12 { width: 10px; height: 10px; }
.grow { flex: 1; min-width: 0; }
.self { display: flex; align-items: center; gap: 4px; height: 15px; margin-top: 1px; background: #474747; font-size: 7px; border-bottom: 1px solid #2c2c2c; }
.tree { list-style: none; margin: 2px 0 0; padding: 0; }
.tree li { display: flex; align-items: center; gap: 2px; height: 12px; font-size: 7px; white-space: nowrap; color: #d8d8d8; }
.tree .selected { height: 13px; padding-left: 6px; gap: 1px; background: #dfa30c; color: #141414; }
.tree .child { padding-left: 19px; gap: 1px; }
.spaced { height: 18px; padding-top: 4px; }
.blueprint { flex: 1; background: #3e3e3e; padding: 3px 2px 0; }
.blueprint .tools { padding: 0 1px 0 2px; height: 16px; }
.viewopt { gap: 2px; margin-left: 2px; width: 23px; color: #ddd; }
.cat { display: flex; align-items: center; height: 14px; background: #2f2f2f; border-radius: 2px; color: #e2e2e2; text-shadow: 0 1px 1px #000; }
.cat .ic5, .item > .ic5 { color: #bbb; margin-right: 1px; }
.cat button { margin-left: auto; width: 13px; height: 12px; justify-content: center; background: #444; border-radius: 2px; color: #fff; }
.cat small { font-size: 7px; color: #8c8c8c; margin-left: 3px; }
.cat.after { margin-top: 2px; }
.cat.bare { padding-left: 6px; margin-bottom: 2px; }
.tools + .cat { margin-top: 4px; }
.item { display: flex; align-items: center; height: 12px; }
.cat + .item { height: 14px; }
.item .ic12 { margin-right: 1px; }
.item.sub { padding-left: 12px; gap: 2px; }
.item.fn { padding-left: 5px; }

.toolbar { display: flex; height: 39px; flex: none; align-items: stretch; background: #3e3e3e; margin-right: 1px; }
.toolbar hr { width: 1px; margin: 2px 5px; border: 0; background: #2a2a2a; }
.tool { flex-direction: column; justify-content: flex-start; width: 34px; padding-top: 4px; color: #d6d6d6; text-shadow: 0 1px 1px #000; line-height: 10px; }
.tool > svg { width: 26px; height: 23px; }
.tool.narrow { width: 32px; }
.tool.mid { width: 47px; }
.tool.wide { width: 59px; }
.drop { width: 18px; justify-content: center; color: #ccc; }
.drop.slim { width: 16px; }
.debug { display: flex; flex-direction: column; align-items: center; margin: 11px 0 0 1px; line-height: 11px; }
.selwrap { position: relative; width: 99px; height: 14px; background: #e2e2e2; border: 1px solid #fff; color: #111; }
.selwrap select { appearance: none; width: 100%; height: 12px; padding: 0 9px 0 2px; font-size: 7px; font-weight: 500; }
.selwrap .car { position: absolute; right: 3px; top: 4px; }

.strip.views { height: 18px; padding-top: 3px; border-bottom: 1px solid #383838; }
.viewport { position: relative; flex: 1; min-height: 0; background: #222; border: 1px solid #444; margin-right: 1px; }
.scene { position: absolute; inset: 0; width: 100%; height: 100%; }
.axes text { font: 700 8px Roboto, sans-serif; }
.vp-bar { position: relative; display: flex; gap: 4px; padding: 3px 4px 0 3px; }
.push { flex: 1; }
.pill { height: 14px; background: #8c8c8c; color: #1c1c1c; border-radius: 4px; padding: 0 3px 0 2px; gap: 3px; font-weight: 500; border: 1px solid #7a7a7a; }
.pill.label { font-size: 7px; font-weight: 700; }
.pill.sq { width: 13px; padding: 0; justify-content: center; }
.group { display: flex; padding: 0; gap: 0; overflow: hidden; }
.group button { flex: 1; justify-content: center; border-right: 1px solid #707070; }
.group.three { width: 44px; }
.group.two { width: 39px; }
.group .on { background: #c47a12; flex: 0 0 14px; }
.group .ic12, .pill.sq .ic12 { width: 10px; height: 10px; }
.pill.cam { width: 29px; gap: 5px; justify-content: center; }

.results-tabs { height: 18px; padding-top: 4px; }
.find { height: 96px; flex: none; display: flex; flex-direction: column; background: #3e3e3e; padding: 1px 1px 0 0; margin-right: 1px; }
.findrow { display: flex; gap: 3px; height: 15px; }
.findrow .field, .findrow .bino { height: 13px; }
.bino { width: 15px; justify-content: center; background: #d4d4d4; margin-right: 1px; }
.bino .ic12 { width: 11px; height: 11px; }
.found { flex: 1; margin-top: 1px; border: 1px solid #101010; background: linear-gradient(#252525, #1a1a1a 50%); }

.right { padding-left: 3px; background: #222; }
.details { flex: 1; display: flex; flex-direction: column; min-height: 0; background: #3e3e3e; padding: 3px 2px 2px 0; }
.right .strip { padding-left: 0; }
.dsearch { display: flex; align-items: center; gap: 5px; height: 12px; margin-bottom: 2px; }
.matrix { width: 16px; height: 13px; background: #d0d0d0; justify-content: center; }
.matrix svg { width: 11px; height: 9px; }
.dsearch .viewopt { margin-left: -2px; }
.props { position: relative; flex: 1; min-height: 0; display: flex; flex-direction: column; font-size: 7px; overflow: hidden; }
.props section { padding-bottom: 8px; background: linear-gradient(90deg, transparent 86px, #2c2c2c 86px, #2c2c2c 87px, transparent 87px); }
.props .flush { padding-bottom: 0; }
.props h2 { display: flex; align-items: center; gap: 2px; height: 18px; margin: 0; padding-left: 1px; font-size: 8px; font-weight: 700; color: #e0e0e0; background: linear-gradient(90deg, #2f2f2f 86px, #252525 86px, #252525 87px, #2f2f2f 87px); border-top: 1px solid #393939; text-shadow: 0 1px 1px #000; }
.row { display: grid; grid-template-columns: 89px 1fr; align-items: center; height: 15px; }
.row > div { display: flex; align-items: center; }
.row.tall { height: 17px; }
.row.visuals { height: 16px; }
.row label, .row .name { display: flex; align-items: center; padding-left: 9px; white-space: nowrap; }
.row.visuals label { padding-left: 2px; gap: 3px; }
.row.visuals label svg { width: 4px; height: 6px; }
.socket { width: 47px; height: 13px; padding-left: 3px; background: #7a7a7a; color: #d0d0d0; border: 1px solid #8a8a8a; font-size: 7px; }
.g { color: #909090; margin-left: 5px; }
.num { display: flex; align-items: center; width: 65px; height: 11px; padding: 0 2px; background: #d6d6d6; color: #222; border-radius: 2px; }
.num input { flex: 1; width: 0; min-width: 0; height: 11px; outline: 0; }
.num svg { width: 8px; height: 8px; }
.combo { display: flex; align-items: center; width: 68px; height: 13px; padding: 0 3px 0 1px; background: #585858; border-radius: 2px; }
.combo select { flex: 1; appearance: none; min-width: 0; color: #ddd; }
.row input[type=checkbox] { appearance: none; width: 9px; height: 9px; background: #a8a8a8; border-radius: 1px; }
.row input[type=checkbox]:checked { background: #e0e0e0; }
.row input[type=checkbox]:checked::before { content: ""; display: block; width: 3px; height: 5px; margin: 1px 0 0 3px; border: solid #222; border-width: 0 1px 1px 0; transform: rotate(45deg); }
.more { width: 100%; height: 8px; margin-top: 2px; justify-content: center; background: #474747; color: #ddd; padding-right: 8px; }
.array { gap: 14px; padding-left: 2px; color: #d4d4d4; }
.array button { color: #fff; margin-right: -6px; }
.events { flex: 1; display: flex; flex-direction: column; }
.events h2 { flex: none; }
.evlist { flex: 1; display: grid; grid-auto-rows: 1fr; }
.evlist .row { height: auto; }
.evlist .name { gap: 3px; }
.evlist .green { width: 94px; height: 13px; }
.scroll { position: absolute; top: 0; bottom: 0; right: 0; width: 6px; z-index: 2; background: linear-gradient(90deg, transparent 4px, #555 4px, #555 5px, transparent 5px); }
.scroll i { display: block; margin-top: 104px; height: 438px; background: #fff; }
```
